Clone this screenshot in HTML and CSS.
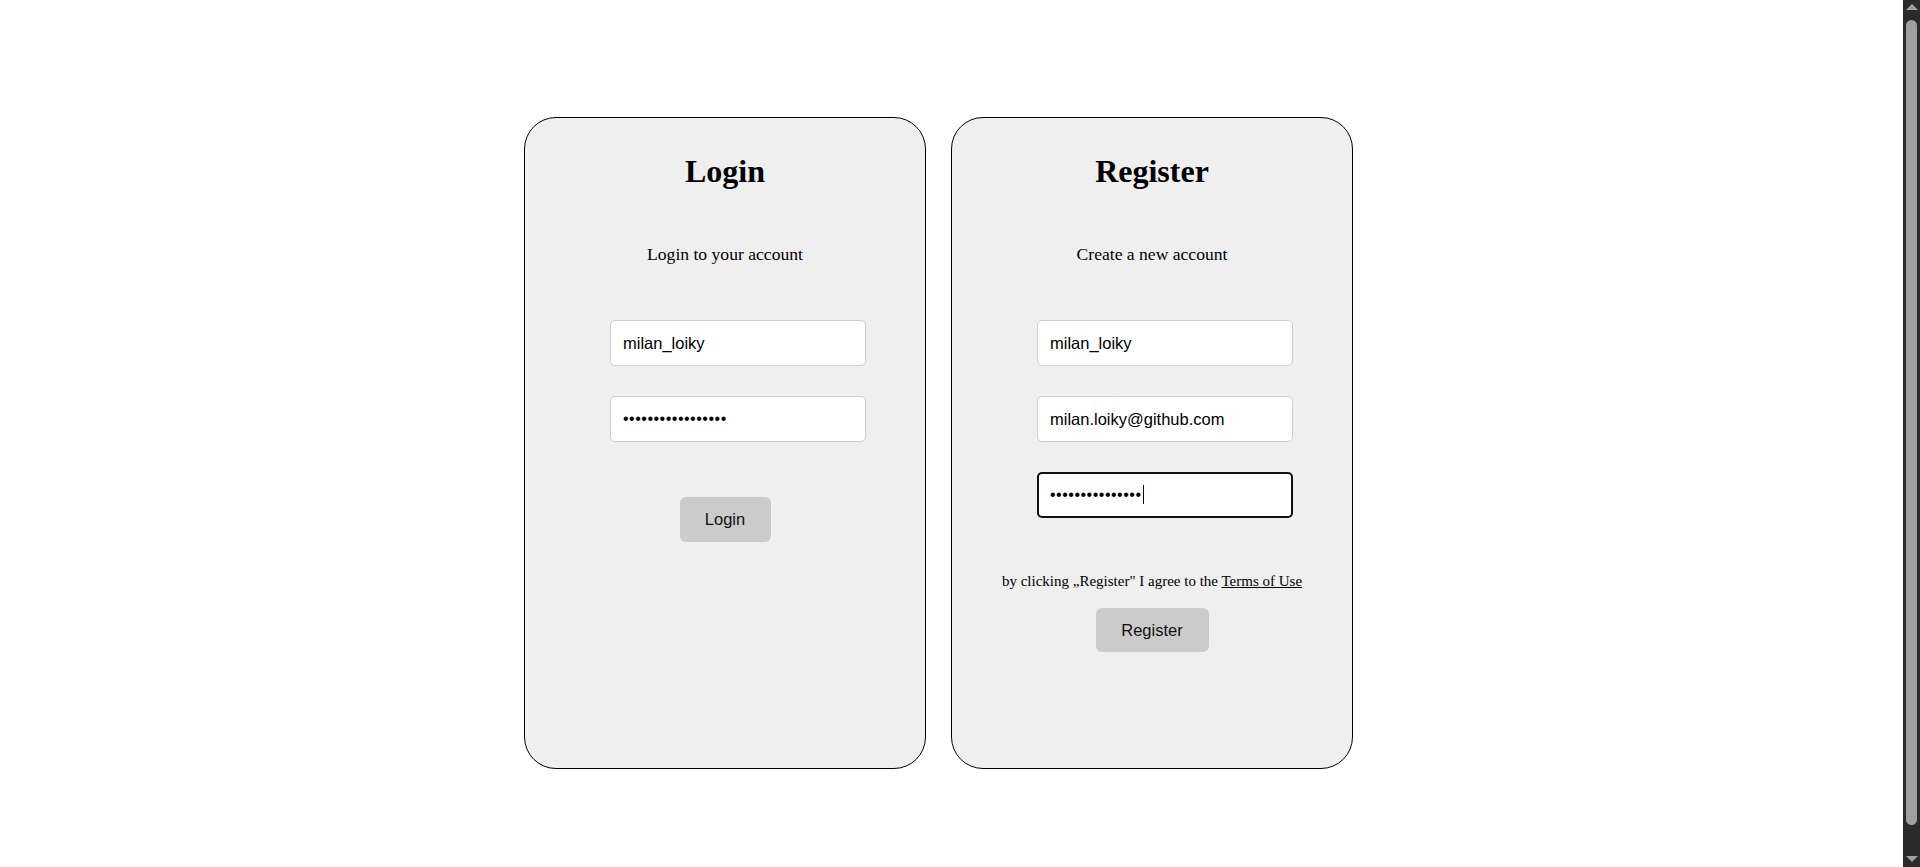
FILE: index.html
```html
<!DOCTYPE html>
<html lang="en">
<head>
<meta charset="utf-8">
<title>Login / Register</title>
<link rel="stylesheet" href="styles.css">
</head>
<body>
<main class="page">
  <section class="card">
    <h1 class="title">Login</h1>
    <p class="subtitle">Login to your account</p>
    <form class="fields">
      <input class="field" type="text" value="milan_loiky">
      <input class="field field-pass" type="password" value="aaaaaaaaaaaaaaaaa">
    </form>
    <button class="btn btn-login" type="button">Login</button>
  </section>
  <section class="card">
    <h1 class="title">Register</h1>
    <p class="subtitle">Create a new account</p>
    <form class="fields">
      <input class="field" type="text" value="milan_loiky">
      <input class="field" type="text" value="milan.loiky@github.com">
      <span class="field-wrap">
        <input class="field field-pass field-focus" type="password" value="aaaaaaaaaaaaaaa">
        <span class="caret"></span>
      </span>
    </form>
    <p class="terms">by clicking „Register" I agree to the <a class="terms-link" href="#">Terms of Use</a></p>
    <button class="btn btn-register" type="button">Register</button>
  </section>
</main>
<div class="scrollbar" aria-hidden="true">
  <span class="sb-arrow sb-up"></span>
  <span class="sb-thumb"></span>
  <span class="sb-arrow sb-down"></span>
</div>
</body>
</html>
```
FILE: styles.css
```css
html, body {
  margin: 0;
  padding: 0;
  background: #ffffff;
  overflow: hidden;
}

body {
  font-family: "Liberation Serif", "Times New Roman", serif;
  color: #000;
}

.page {
  display: flex;
  justify-content: center;
  align-items: flex-start;
  gap: 25px;
  padding: 117px 43px 98px 0;
}

.card {
  width: 400px;
  height: 652px;
  background: #efefef;
  border: 1px solid #000;
  border-radius: 32px;
  display: flex;
  flex-direction: column;
  align-items: center;
  padding-top: 35px;
  box-sizing: border-box;
  width: 402px;
}

.title {
  margin: 0;
  font-size: 32px;
  line-height: 37px;
  font-weight: bold;
}

.subtitle {
  margin: 54px 0 0;
  font-size: 17.6px;
  line-height: 20px;
}

.fields {
  width: 230px;
  margin: 56px 0 0;
  display: flex;
  flex-direction: column;
  gap: 30px;
}

.field {
  display: block;
  width: 100%;
  height: 20px;
  padding: 12px;
  margin: 0;
  border: 1px solid #cfcfcf;
  border-radius: 5px;
  background: #fff;
  font-family: "Liberation Sans", Arial, sans-serif;
  font-size: 16.5px;
  color: #000;
  box-sizing: content-box;
  outline: none;
}

.field-pass {
  font-size: 16px;
  letter-spacing: 0.5px;
}

.field-wrap {
  position: relative;
  display: block;
}

.field-focus {
  border: 2px solid #111;
  padding: 11px;
}

.caret {
  position: absolute;
  left: 106px;
  top: 13px;
  width: 1px;
  height: 19px;
  background: #000;
}

.terms {
  margin: 55px 0 0;
  font-size: 15px;
  line-height: 17px;
  white-space: nowrap;
}

.terms-link {
  color: #000;
  text-decoration: underline;
}

.btn {
  height: 45px;
  padding: 0;
  border: none;
  border-radius: 6px;
  background: #cbcbcb;
  font-family: "Liberation Sans", Arial, sans-serif;
  font-size: 16.5px;
  color: #111;
}

.btn-login {
  margin-top: 55px;
  width: 91px;
}

.btn-register {
  margin-top: 18px;
  height: 44px;
  width: 113px;
}

.scrollbar {
  position: fixed;
  top: 0;
  right: 0;
  width: 17px;
  height: 100vh;
  background: #2b2b2b;
  display: flex;
  flex-direction: column;
  align-items: center;
  padding: 4px 0 5px;
  box-sizing: border-box;
}

.sb-arrow {
  display: block;
  width: 0;
  height: 0;
  border-left: 6px solid transparent;
  border-right: 6px solid transparent;
}

.sb-up {
  border-bottom: 6px solid #a0a0a0;
}

.sb-down {
  margin-top: auto;
  border-top: 6px solid #a0a0a0;
}

.sb-thumb {
  display: block;
  width: 11px;
  height: 805px;
  margin-top: 10px;
  background: #a0a0a0;
  border-radius: 6px;
}
```
